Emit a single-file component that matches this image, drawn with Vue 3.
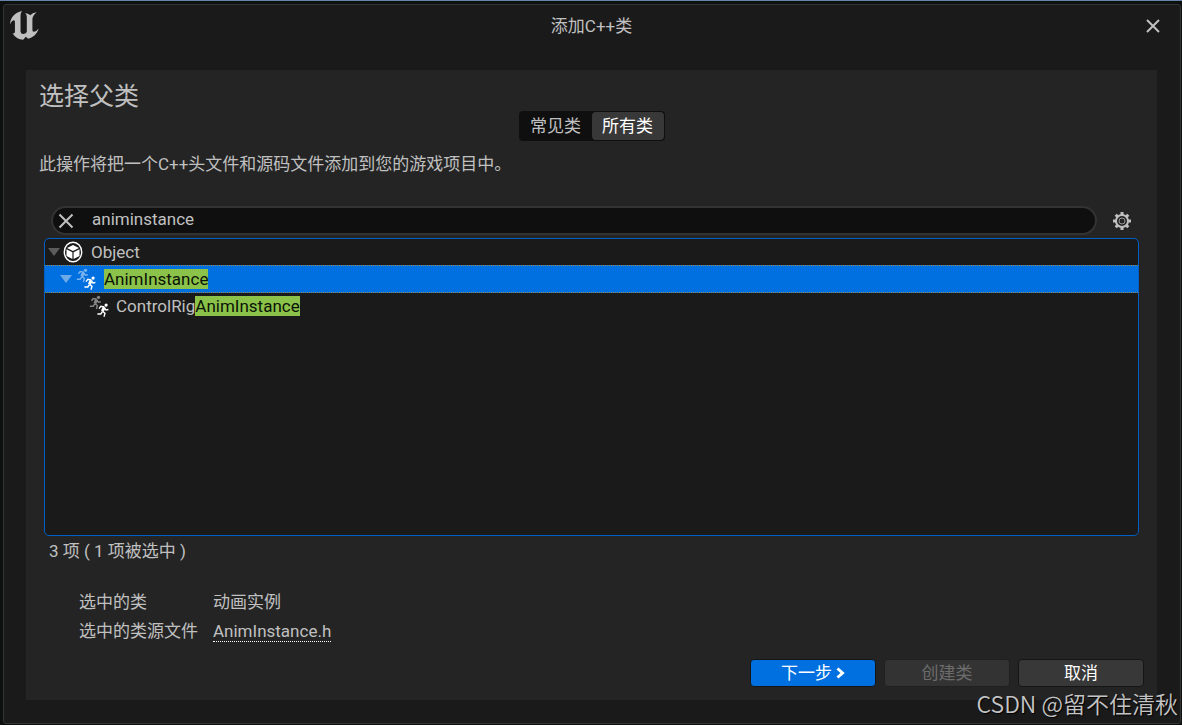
<script setup>
import { ref } from 'vue'

const scope = ref('all')
const search = ref('animinstance')
</script>

<template>
  <div class="desktop">
    <main class="window">
      <header class="titlebar">
        <svg class="logo" viewBox="30 33 88 88" aria-hidden="true">
          <path d="M67 33C52 36 31 46 30 74C34 65 38 61 42 61Q45 61 45 66V96Q45 102 38 101C45 113 56 119 70 120L78 111L85 117C99 114 112 104 117 86C112 92 107 96 102 96Q98 96 98 91V58Q98 47 111 37C102 38 96 42 92 46Q88 41 76 39Q81 43 81 51V97Q77 103 70 103Q63 103 62 96V47Q62 37 67 33Z" />
        </svg>
        <h1>添加C++类</h1>
        <button class="close" type="button" aria-label="关闭">
          <svg viewBox="0 0 14 14"><path d="M1 1L13 13M13 1L1 13" /></svg>
        </button>
      </header>

      <section class="panel">
        <h2>选择父类</h2>
        <div class="segments">
          <button type="button" :class="{ active: scope === 'common' }" @click="scope = 'common'">常见类</button>
          <button type="button" :class="{ active: scope === 'all' }" @click="scope = 'all'">所有类</button>
        </div>
        <p class="intro">此操作将把一个C++头文件和源码文件添加到您的游戏项目中。</p>

        <div class="search-row">
          <div class="search">
            <button type="button" aria-label="清除搜索" @click="search = ''">
              <svg viewBox="0 0 16 16"><path d="M1.5 1.5L14.5 14.5M14.5 1.5L1.5 14.5" /></svg>
            </button>
            <input v-model="search" type="text" aria-label="搜索类" />
          </div>
          <button class="gear" type="button" aria-label="设置">
            <svg viewBox="-10 -10 20 20">
              <g class="teeth">
                <path d="M0-9V-5M0 9V5M-9 0H-5M9 0H5M-6.3-6.3L-4-4M6.3 6.3L4 4M-6.3 6.3L-4 4M6.3-6.3L4-4" />
              </g>
              <circle class="rim" r="6" />
              <circle class="hub" r="3" />
            </svg>
          </button>
        </div>

        <ul class="tree" role="tree" aria-label="类">
          <li class="row" role="treeitem" aria-expanded="true">
            <svg class="arrow" viewBox="0 0 12 8"><path d="M0 0H12L6 8Z" /></svg>
            <svg class="object" viewBox="-10 -11 20 22">
              <ellipse rx="8.7" ry="9.8" />
              <path d="M0-7L6-4L0-1L-6-4ZM-6.5-2.8L-.6 .2V7L-6.5 4ZM6.5-2.8L.6 .2V7L6.5 4Z" />
            </svg>
            <span>Object</span>
          </li>
          <li class="row level-1 selected" role="treeitem" aria-expanded="true" aria-selected="true">
            <svg class="arrow" viewBox="0 0 12 8"><path d="M0 0H12L6 8Z" /></svg>
            <svg class="runner" viewBox="0 0 20 22">
              <g id="runner-figure">
                <circle cx="9.5" cy="2.3" r="1.6" />
                <path class="torso" d="M7.6 4.4L5.8 8.6" />
                <path d="M7.8 4.2L4.2 3.5L2.4 5.8M7.8 5L9.3 7.2L11.8 6.7M5.8 8.8L4.2 11.2L.8 11.2M5.8 8.5L8.4 10.5L7.4 14" />
              </g>
              <use class="front" href="#runner-figure" x="7.6" y="7.8" />
            </svg>
            <span><mark>AnimInstance</mark></span>
          </li>
          <li class="row level-2" role="treeitem">
            <svg class="runner" viewBox="0 0 20 22">
              <use href="#runner-figure" />
              <use class="front" href="#runner-figure" x="7.6" y="7.8" />
            </svg>
            <span>ControlRig<mark>AnimInstance</mark></span>
          </li>
        </ul>
        <p class="count">3 项 ( 1 项被选中 )</p>

        <dl class="details">
          <dt>选中的类</dt>
          <dd>动画实例</dd>
          <dt>选中的类源文件</dt>
          <dd><a href="#">AnimInstance.h</a></dd>
        </dl>

        <footer class="actions">
          <button class="primary" type="button">
            下一步<svg viewBox="0 0 9 12"><path d="M1.5 1.5L6.5 6L1.5 10.5" /></svg>
          </button>
          <button type="button" disabled>创建类</button>
          <button type="button">取消</button>
        </footer>
      </section>
    </main>
    <div class="watermark">CSDN @留不住清秋</div>
  </div>
</template>

<style>
html,
body {
  margin: 0;
  background: #0e0f0f;
}
</style>

<style scoped>
.desktop {
  position: relative;
  box-sizing: border-box;
  display: flex;
  min-height: 100vh;
  padding: 3px 1px 1px 3px;
  border-top: 1px solid #6785a8;
  background: #0e0f0f;
  color: #c0c0c0;
  font: 17px/24px Roboto, "Noto Sans CJK SC", sans-serif;
}
.desktop *,
.desktop *::before {
  box-sizing: border-box;
}
h1,
h2,
p,
dl,
dd,
ul {
  margin: 0;
  padding: 0;
  font-weight: 400;
}
button {
  padding: 0;
  border: 0;
  background: none;
  color: inherit;
  font: inherit;
}
svg {
  display: block;
  flex: none;
  fill: none;
  stroke: currentColor;
}
.window {
  display: flex;
  flex: 1;
  flex-direction: column;
  min-width: 0;
  padding: 0 23px 23px 22px;
  border: 1px solid #333;
  border-radius: 3px;
  background: #1a1a1a;
}
.titlebar {
  display: grid;
  grid-template-columns: 1fr auto 1fr;
  align-items: center;
  height: 65px;
  margin: 0 -18px;
  padding-bottom: 24px;
}
.logo {
  width: 29px;
  height: 29px;
  margin-left: 2px;
  fill: #c0c0c0;
  stroke: none;
}
h1 {
  font-size: 17px;
}
.close {
  justify-self: end;
  margin-right: 15px;
}
.close svg {
  width: 14px;
  height: 14px;
  stroke-width: 2;
}
.panel {
  display: flex;
  flex: 1;
  flex-direction: column;
  padding: 10px 13px 13px;
  background: #242424;
}
h2 {
  font-size: 25px;
  line-height: 34px;
}
.segments {
  display: flex;
  align-self: center;
  margin-top: -3px;
  padding: 1px;
  border-radius: 4px;
  background: #0f0f0f;
}
.segments button {
  width: 72px;
  height: 28px;
  border-radius: 4px;
}
.segments .active {
  background: #383838;
  color: #fff;
}
.intro {
  margin-top: 11px;
}
.search-row {
  display: flex;
  align-items: center;
  gap: 15px;
  margin: 30px 12px 3px 12px;
}
.search {
  display: flex;
  flex: 1;
  align-items: center;
  height: 29px;
  padding: 0 5px;
  border: 2px solid #333;
  border-radius: 15px;
  background: #0f0f0f;
}
.search svg {
  width: 16px;
  height: 16px;
  margin-right: 18px;
  stroke-width: 2;
}
.search input {
  flex: 1;
  min-width: 0;
  height: 24px;
  padding: 0 0 3px;
  border: 0;
  outline: 0;
  background: none;
  color: inherit;
  font: inherit;
}
.gear svg {
  width: 20px;
  height: 20px;
}
.teeth {
  stroke-width: 3;
}
.rim {
  fill: #242424;
  stroke-width: 2;
}
.hub {
  stroke: #999;
  stroke-width: 1;
}
.tree {
  flex: 1;
  margin: 0 5px;
  border: 1px solid #0060c8;
  border-radius: 5px;
  background: #1a1a1a;
  list-style: none;
}
.row {
  display: flex;
  align-items: center;
  height: 27px;
  padding: 0 0 2px 3px;
}
.level-1 {
  padding-left: 15px;
}
.level-2 {
  padding-left: 44px;
}
.arrow {
  width: 12px;
  height: 8px;
  fill: #5c5c5c;
  stroke: none;
}
.selected {
  height: 28px;
  margin-top: -1px;
  padding-bottom: 0;
  border: 1px dotted #9a8a50;
  border-width: 1px 0;
  background: #0070e0;
}
.selected .arrow {
  fill: #6eaae8;
}
.object {
  width: 20px;
  height: 22px;
  margin: 0 8px 0 3px;
  color: #fff;
}
.object ellipse {
  stroke-width: 1.4;
}
.object path {
  fill: #fff;
  stroke: none;
}
.runner {
  width: 20px;
  height: 22px;
  margin-right: 7px;
  color: #858585;
  stroke-width: 1.4;
}
.selected .runner {
  margin-right: 8px;
  margin-left: 4px;
  color: #79b2ef;
}
.runner circle {
  fill: currentColor;
  stroke: none;
}
.torso {
  stroke-width: 3;
}
.runner .front {
  color: #fff;
}
mark {
  background: #8bc34a;
  color: #0b1206;
}
.count {
  margin: 3px 0 0 10px;
}
.details {
  display: grid;
  grid-template-columns: 134px 1fr;
  row-gap: 5px;
  margin: 27px 0 16px 40px;
}
.details a {
  display: inline-block;
  border-bottom: 1px dotted #fff;
  color: inherit;
  line-height: 20px;
  text-decoration: none;
}
.actions {
  display: flex;
  justify-content: flex-end;
  gap: 8px;
}
.actions button {
  display: flex;
  align-items: center;
  justify-content: center;
  width: 126px;
  height: 28px;
  border: 1px solid #151515;
  border-radius: 4px;
  background: #383838;
  color: #fff;
}
.actions .primary {
  background: #0070e0;
}
.actions .primary svg {
  width: 9px;
  height: 12px;
  margin-left: 4px;
  stroke-width: 3;
}
.actions button:disabled {
  border-color: #202020;
  background: #333;
  color: #6c6c6c;
}
.watermark {
  position: absolute;
  right: 4px;
  bottom: 6px;
  color: #c4c4c4;
  font: 23px/32px "Noto Sans CJK SC", sans-serif;
  font-weight: 350;
  text-shadow: 1px 1px 1px #000;
}
</style>
